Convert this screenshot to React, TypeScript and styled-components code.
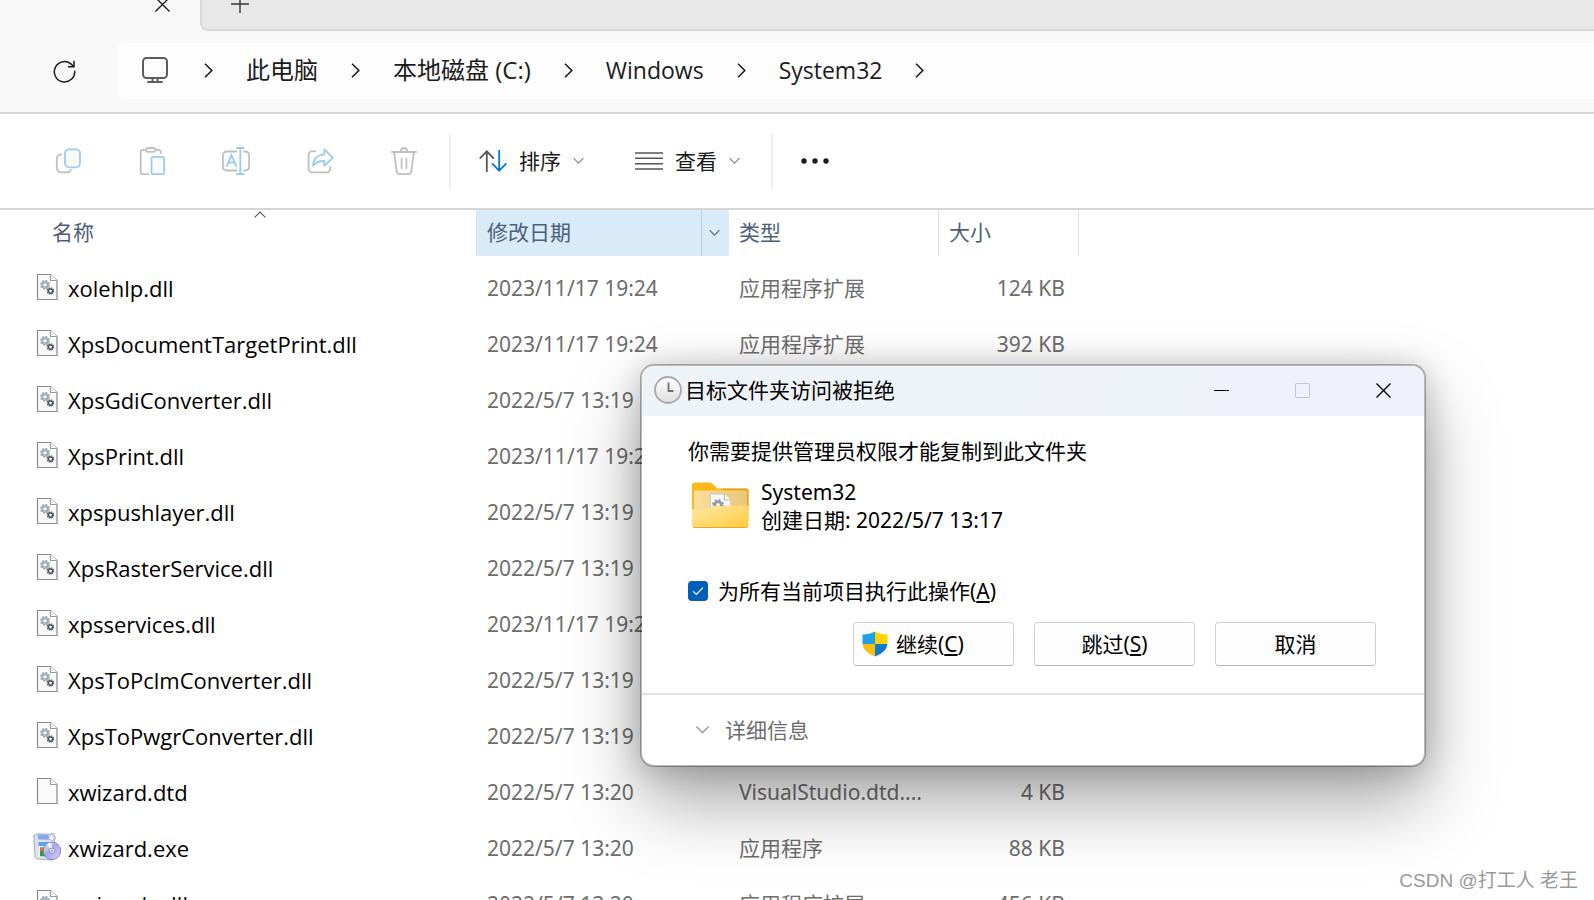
import React from "react";
import styled, { createGlobalStyle } from "styled-components";

const GlobalStyle = createGlobalStyle`
  * { box-sizing: border-box; }
  body {
    margin: 0;
    background: #fff;
    color: #000;
    font: 21px/28px "Noto Sans", "Noto Sans CJK SC", sans-serif;
  }
  button {
    margin: 0;
    padding: 0;
    border: 0;
    background: none;
    color: inherit;
    font: inherit;
  }
  svg { display: block; flex: none; }
`;

const Page = styled.div`
  position: relative;
  display: flex;
  flex-direction: column;
  height: 100vh;
  overflow: hidden;
`;

/* ---------- window chrome ---------- */

const TabStrip = styled.div`
  display: flex;
  flex: none;
  height: 54px;
  margin-top: -23px;
  background: #f8f8f8;
`;

const ActiveTab = styled.div`
  display: flex;
  flex: none;
  align-items: center;
  justify-content: flex-end;
  width: 200px;
  padding-right: 30px;
  color: #1b1b1b;
`;

const InactiveStrip = styled.div`
  display: flex;
  flex: 1;
  align-items: center;
  padding: 2px 0 0 29px;
  border: 2px solid #d8d8d8;
  border-width: 0 0 2px 2px;
  border-bottom-left-radius: 8px;
  background: #e8e8e8;
  color: #3a3a3a;
`;

const AddressRow = styled.div`
  display: flex;
  flex: none;
  align-items: center;
  height: 83px;
  padding: 0 0 1px 53px;
  border-bottom: 2px solid #d5d5d5;
  background: #f8f8f8;
  color: #1b1b1b;
`;

const Breadcrumb = styled.nav`
  display: flex;
  flex: 1;
  align-items: center;
  gap: 33px;
  height: 56px;
  margin-left: 41px;
  padding: 0 0 2px 25px;
  border-radius: 8px 0 0 8px;
  background: #fdfdfd;
`;

const CrumbRoot = styled.button`
  margin-right: 3px;
`;

const Crumb = styled.button<{ $latin: boolean }>`
  font-family: "Open Sans", "Noto Sans CJK SC", sans-serif;
  font-size: ${(p) => (p.$latin ? 23 : 24)}px;
  line-height: 32px;
  white-space: nowrap;
`;

/* ---------- command bar ---------- */

const Toolbar = styled.div`
  display: flex;
  flex: none;
  align-items: center;
  height: 96px;
  padding-left: 54px;
  border-bottom: 2px solid #d5d5d5;
  color: #1b1b1b;
`;

const IconGroup = styled.div`
  display: flex;
  gap: 56px;
`;

const MenuGroup = styled.div`
  display: flex;
  gap: 51px;
`;

const Divider = styled.div`
  width: 2px;
  height: 56px;
  margin: 0 28px 0 31px;
  background: #efefef;
`;

const MenuButton = styled.button`
  display: flex;
  align-items: center;
  gap: 12px;
`;

/* ---------- file list ---------- */

const FileTable = styled.table`
  flex: none;
  width: 1079px;
  border-collapse: separate;
  border-spacing: 0;
  table-layout: fixed;
`;

const HeadCell = styled.th<{ $width: number }>`
  width: ${(p) => p.$width}px;
  height: 50px;
  padding: 0 0 4px;
  color: #4c607a;
  font-weight: 400;
  text-align: left;
  vertical-align: top;
`;

const HeadLabel = styled.div<{ $indent: number; $active?: boolean }>`
  position: relative;
  display: flex;
  align-items: center;
  height: 46px;
  padding: 0 0 2px ${(p) => p.$indent}px;
  border-right: ${(p) => (p.$active ? "0" : "1px solid #e0e0e0")};
  border-radius: ${(p) => (p.$active ? "2px" : "0")};
  background: ${(p) => (p.$active ? "#d9ebf9" : "transparent")};
`;

const SortMark = styled.span`
  position: absolute;
  top: 1px;
  left: 254px;
  color: #555;
`;

const FilterButton = styled.button`
  display: flex;
  align-items: center;
  justify-content: center;
  align-self: flex-start;
  width: 28px;
  height: 46px;
  margin-left: auto;
  padding-right: 3px;
  border-left: 1px solid #b9cfe0;
  color: #5f6b78;
`;

const Cell = styled.td<{ $indent?: number; $right?: boolean }>`
  height: 56px;
  padding: 0 ${(p) => (p.$right ? 14 : 0)}px 0 ${(p) => p.$indent ?? 0}px;
  color: #6d6d6d;
  text-align: ${(p) => (p.$right ? "right" : "left")};
  white-space: nowrap;
`;

const FileName = styled.div`
  display: flex;
  align-items: center;
  gap: 7px;
  padding-left: 33px;
  color: #000;
  font-family: "Open Sans", sans-serif;
  font-size: 22px;

  svg { margin-bottom: 2px; }
`;

/* ---------- dialog ---------- */

const Dialog = styled.section`
  position: absolute;
  top: 364px;
  left: 640px;
  width: 786px;
  border: 2px solid rgba(0, 0, 0, 0.28);
  border-radius: 14px;
  background: #fff;
  background-clip: padding-box;
  box-shadow: 0 36px 72px rgba(0, 0, 0, 0.34), 0 2px 32px rgba(0, 0, 0, 0.2);
`;

const TitleBar = styled.header`
  display: flex;
  align-items: center;
  gap: 3px;
  height: 50px;
  padding: 0 33px 2px 12px;
  border-radius: 12px 12px 0 0;
  background: linear-gradient(100deg, #eef3f8 40%, #eff2fa 80%);
`;

const DialogTitle = styled.h1`
  flex: 1;
  margin: 0;
  font: inherit;
`;

const WindowButtons = styled.div`
  display: flex;
  gap: 66px;
`;

const DialogBody = styled.div`
  padding: 21px 48px 27px 46px;
`;

const Message = styled.p`
  margin: 0;
`;

const Target = styled.div`
  display: flex;
  align-items: center;
  gap: 12px;
  margin-top: 13px;
  padding-left: 4px;

  svg { margin-bottom: 3px; }
`;

const ApplyAll = styled.label`
  display: flex;
  align-items: center;
  gap: 10px;
  margin-top: 43px;
`;

const CheckBox = styled.span`
  display: grid;
  place-items: center;
  width: 20px;
  height: 20px;

  & > * { grid-area: 1 / 1; }
  svg { z-index: 1; pointer-events: none; }
  input {
    appearance: none;
    width: 20px;
    height: 20px;
    margin: 0;
    border-radius: 4px;
    background: #005fb8;
  }
`;

const Actions = styled.div`
  display: flex;
  justify-content: flex-end;
  gap: 20px;
  margin-top: 17px;
`;

const ActionButton = styled.button<{ $start?: boolean }>`
  display: flex;
  align-items: center;
  justify-content: ${(p) => (p.$start ? "flex-start" : "center")};
  gap: 8px;
  width: 161px;
  height: 44px;
  padding-left: ${(p) => (p.$start ? 8 : 0)}px;
  border: 1px solid #d0d0d0;
  border-bottom-color: #b8b8b8;
  border-radius: 4px;
  background: #fdfdfd;
`;

const DialogFooter = styled.footer`
  height: 72px;
  padding: 21px 0 0 53px;
  border-top: 2px solid #e3e3e3;
  color: #6d6d6d;
`;

const DetailsButton = styled.button`
  display: flex;
  align-items: center;
  gap: 15px;
`;

const Watermark = styled.div`
  position: absolute;
  right: 16px;
  bottom: 5px;
  color: #999;
  font-family: "Liberation Sans", "Noto Sans CJK SC", sans-serif;
  font-size: 19px;
  text-shadow: 1px 1px 0 #fff;
`;

/* ---------- icons ---------- */

const line = { fill: "none", stroke: "currentColor" } as const;
const GRAY = "#c0c0c0";
const BLUE = "#9bcbf2";

const CloseIcon = () => (
  <svg width="15" height="15" viewBox="0 0 15 15" {...line} strokeWidth="1.4">
    <path d="M.5.5l14 14M14.5.5l-14 14" />
  </svg>
);

const PlusIcon = () => (
  <svg width="18" height="18" viewBox="0 0 18 18" {...line} strokeWidth="1.4">
    <path d="M9 0v18M0 9h18" />
  </svg>
);

const RefreshIcon = () => (
  <svg width="23" height="23" viewBox="0 0 23 23" {...line} strokeWidth="1.5">
    <path d="M21.700 10.800A10.200 10.200 0 1 1 18.600 4.400l2 2.200" />
    <path d="M21 .8v6h-6" />
  </svg>
);

const MonitorIcon = () => (
  <svg width="26" height="26" viewBox="0 0 26 26" {...line} stroke="#5c5c5c" strokeWidth="2" strokeLinecap="round">
    <rect x="1" y="1" width="24" height="20" rx="3.5" />
    <path d="M10.500 21.500v3M15.500 21.500v3M6 25h14" />
  </svg>
);

const CrumbChevron = () => (
  <svg width="9" height="15" viewBox="0 0 9 15" {...line} strokeWidth="1.6">
    <path d="M1 .8l6.800 6.700L1 14.200" />
  </svg>
);

const DownChevron = ({ width = 11, color = "#8a8a8a" }: { width?: number; color?: string }) => (
  <svg width={width} height={(width + 1) / 2 + 2} viewBox="0 0 11 8" {...line} stroke={color} strokeWidth="1.200">
    <path d="M.6 1.200l4.900 5 4.900-5" />
  </svg>
);

const UpChevron = () => (
  <svg width="12" height="7" viewBox="0 0 12 7" {...line} strokeWidth="1.100">
    <path d="M.6 6.400L6 1l5.400 5.400" />
  </svg>
);

const CopyIcon = () => (
  <svg width="28" height="28" viewBox="0 0 28 28" fill="none" strokeWidth="1.800" strokeLinecap="round">
    <path stroke={GRAY} d="M7.500 7.300C4.500 7.300 2.800 9 2.800 12v8.500c0 3.200 1.600 4.900 4.900 4.900h4.800c2.200 0 3.700-.8 4.300-2.500" />
    <rect stroke={BLUE} x="11" y="2.300" width="15" height="18" rx="4" fill="#fafafa" />
  </svg>
);

const PasteIcon = () => (
  <svg width="28" height="28" viewBox="0 0 28 28" fill="none" strokeWidth="1.800" strokeLinecap="round">
    <path stroke={GRAY} d="M7 2.800H5C3.500 2.800 2.700 3.600 2.700 5v20c0 1.400.8 2.200 2.300 2.200h5.200M18 2.800h2.500c1.400 0 2.200.8 2.200 2.200v1.200" />
    <rect stroke={GRAY} x="8" y="1" width="9.500" height="3.800" rx="1.900" />
    <rect stroke={BLUE} x="13.500" y="9.800" width="12.700" height="17.400" rx="1.800" fill="#fafafa" />
  </svg>
);

const RenameIcon = () => (
  <svg width="28" height="28" viewBox="0 0 28 28" fill="none" strokeWidth="1.800" strokeLinecap="round">
    <path stroke={GRAY} d="M14.500 4.500H5C2.400 4.500.9 6 .9 8.500v11c0 2.500 1.500 4 4.100 4h9.500M22 4.500h1c2.600 0 4.100 1.500 4.100 4v11c0 2.500-1.500 4-4.100 4h-1" />
    <path stroke={BLUE} d="M4.800 19L9.500 8l4.700 11M6.400 15.500h6.200M14.800 1h7M14.800 27h7M18.300 1v26" />
  </svg>
);

const ShareIcon = () => (
  <svg width="28" height="28" viewBox="0 0 28 28" fill="none" strokeWidth="1.800" strokeLinecap="round" strokeLinejoin="round">
    <path stroke={GRAY} d="M9.500 4.200H6.800c-2.800 0-4.200 1.500-4.200 4.200v12.800c0 2.700 1.400 4.200 4.200 4.200h13.400c2.700 0 4.200-1.500 4.200-4.200V20" />
    <path stroke={BLUE} d="M18.300 2.500v4.800C12 7.600 7.500 11.600 7 18.600c2.800-3.400 6.600-4.700 11.300-4.600v4.800l8.500-8.200z" />
  </svg>
);

const TrashIcon = () => (
  <svg width="28" height="28" viewBox="0 0 28 28" fill="none" stroke={GRAY} strokeWidth="1.800" strokeLinecap="round">
    <path d="M1.800 5h24.400M4.200 5.500l2.500 19.200c.2 1.600 1.200 2.500 2.800 2.500h9c1.600 0 2.600-.9 2.800-2.500l2.500-19.200M10.500 4.500C10.800 2.200 12 1 14 1s3.200 1.200 3.500 3.500M11.600 12v9M16.400 12v9" />
  </svg>
);

const SortIcon = () => (
  <svg width="28" height="22" viewBox="0 0 28 22" fill="none" strokeWidth="1.800">
    <path stroke="#555" d="M7.800 22V1.500M.7 8.600L7.800 1.300l7.100 7.300" />
    <path stroke="#0078d4" d="M20.200 0v20.500M13.100 13.400l7.100 7.300 7.100-7.300" />
  </svg>
);

const ViewIcon = () => (
  <svg width="28" height="18" viewBox="0 0 28 18" {...line} stroke="#555" strokeWidth="1.600">
    <path d="M0 1h28M0 6.300h28M0 11.700h28M0 17h28" />
  </svg>
);

const MoreIcon = () => (
  <svg width="28" height="6" viewBox="0 0 28 6" fill="#1b1b1b">
    <circle cx="3" cy="3" r="2.700" />
    <circle cx="14" cy="3" r="2.700" />
    <circle cx="25" cy="3" r="2.700" />
  </svg>
);

const Gear = ({ x, y, r, color }: { x: number; y: number; r: number; color: string }) => (
  <g transform={`translate(${x} ${y})`} fill="none" stroke={color}>
    <circle r={r * 0.6} strokeWidth={r * 0.5} />
    <circle r={r * 0.92} strokeWidth={r * 0.36} strokeDasharray={`${r * 0.4} ${r * 0.3226}`} />
  </g>
);

const PageIcon = ({ gears }: { gears?: boolean }) => (
  <svg width="28" height="28" viewBox="0 0 28 28">
    <path d="M4.500 1.500h13l6.500 6v19H4.500z" fill="#fafafa" stroke="#8a8a8a" strokeWidth="1.200" />
    <path d="M17.500 1.500v6H24" fill="#fff" stroke="#9a9a9a" strokeWidth="1.100" />
    {gears && (
      <>
        <Gear x={12} y={11.800} r={4.600} color="#a3afba" />
        <Gear x={17.500} y={18} r={3.500} color="#56626c" />
      </>
    )}
  </svg>
);

const InstallerIcon = () => (
  <svg width="28" height="28" viewBox="0 0 28 28">
    <defs>
      <linearGradient id="disc" x1="0" y1="0" x2="1" y2="1">
        <stop offset="0" stopColor="#e6e6fb" />
        <stop offset=".45" stopColor="#a9a6ee" />
        <stop offset="1" stopColor="#d9daf8" />
      </linearGradient>
    </defs>
    <path d="M.8 2.500l3.500-1.700L16 1.200 20.500.6l1.800 4-.8 3v17.500l-2 2-16-1.300L2 24z" fill="#dde2ec" stroke="#8d97ab" strokeWidth=".8" />
    <path d="M4.500 1.800l11 .3 1 4.700-11-.3z" fill="#86a6ee" />
    <path d="M15.500 5.500l3-4 3 3-2 3.500z" fill="#f4f6fa" stroke="#a0a8b8" strokeWidth=".5" />
    <path d="M5.500 9H20v4H5.500z" fill="#5aa6ee" />
    <path d="M5.500 13H13v10.500l-7.500-.6z" fill="#e8eef8" />
    <path d="M7 14.500h5.500v9L7 23z" fill="#2f9e35" />
    <path d="M7 14.500h3V18H7z" fill="#e2702c" />
    <circle cx="19" cy="17.800" r="8.700" fill="url(#disc)" stroke="#7c7fae" strokeWidth=".9" />
    <path d="M19 17.800l-5.500-6.300a8.300 8.300 0 0 1 4.800-1.900z" fill="#f6f6ff" />
    <circle cx="19" cy="17.800" r="2.700" fill="#eef0fa" stroke="#8689b5" strokeWidth=".9" />
    <circle cx="19" cy="17.800" r=".9" fill="#6a6d96" />
  </svg>
);

const ClockIcon = () => (
  <svg width="28" height="28" viewBox="0 0 28 28">
    <defs>
      <linearGradient id="dial" x1="0" y1="0" x2="0" y2="1">
        <stop offset="0" stopColor="#fff" />
        <stop offset="1" stopColor="#dedede" />
      </linearGradient>
    </defs>
    <circle cx="14" cy="14" r="13" fill="url(#dial)" stroke="#a9a9a9" strokeWidth="1.800" />
    <path d="M14.500 6.500V15h5" fill="none" stroke="#6f6f6f" strokeWidth="1.800" />
  </svg>
);

const FolderIcon = () => (
  <svg width="57" height="46" viewBox="0 0 57 46">
    <defs>
      <linearGradient id="front" x1="0" y1="0" x2="1" y2="1">
        <stop offset="0" stopColor="#ffe9a6" />
        <stop offset="1" stopColor="#ffcc3e" />
      </linearGradient>
      <linearGradient id="inner" x1="0" y1="0" x2="1" y2="0">
        <stop offset="0" stopColor="#fadf9c" />
        <stop offset="1" stopColor="#e9c678" />
      </linearGradient>
    </defs>
    <path d="M0 3q0-2.500 2.500-2.500H17q2 0 3.500 1.300L25.500 6.500H54q2.500 0 2.500 2.500v30H0z" fill="#fbb917" />
    <path d="M30 6.500h24q2.500 0 2.500 2.500v20H50z" fill="#e9a51c" />
    <path d="M2 8.500h53V30H2z" fill="url(#inner)" />
    <path d="M18.500 12h14l6 6v12h-20z" fill="#f8f8f8" stroke="#c9c2b0" strokeWidth=".8" />
    <path d="M32.500 12v6h6" fill="#fff" stroke="#bdb7a8" />
    <Gear x={26} y={23} r={5.400} color="#8f9ba6" />
    <path d="M0 28.500q0-1.500 2-1.600l13-.4q2-.1 3.500-1l1-.6q1.300-.8 3-.9l32-.5q2 0 2 2V42.500q0 3-3 3H3q-3 0-3-3z" fill="url(#front)" />
    <path d="M1 44.500q1 1 2 1h50.500q1.500 0 2.500-1" fill="none" stroke="#e7a823" />
  </svg>
);

const ShieldIcon = () => (
  <svg width="26" height="26" viewBox="0 0 26 26">
    <path d="M13 .5Q8 3.500.5 3.500V13H13z" fill="#1f9fe8" />
    <path d="M13 .5q5 3 12.500 3V13H13z" fill="#fdd400" />
    <path d="M.5 13Q1.500 21.500 13 25.500V13z" fill="#fdbf08" />
    <path d="M25.500 13Q24.500 21.500 13 25.500V13z" fill="#0f7ad8" />
  </svg>
);

/* ---------- data ---------- */

type FileKind = "dll" | "page" | "exe";

interface FileRow {
  name: string;
  date: string;
  kind: FileKind;
  type?: string;
  size?: string;
}

const files: FileRow[] = [
  { name: "xolehlp.dll", date: "2023/11/17 19:24", kind: "dll", type: "应用程序扩展", size: "124 KB" },
  { name: "XpsDocumentTargetPrint.dll", date: "2023/11/17 19:24", kind: "dll", type: "应用程序扩展", size: "392 KB" },
  { name: "XpsGdiConverter.dll", date: "2022/5/7 13:19", kind: "dll" },
  { name: "XpsPrint.dll", date: "2023/11/17 19:24", kind: "dll" },
  { name: "xpspushlayer.dll", date: "2022/5/7 13:19", kind: "dll" },
  { name: "XpsRasterService.dll", date: "2022/5/7 13:19", kind: "dll" },
  { name: "xpsservices.dll", date: "2023/11/17 19:24", kind: "dll" },
  { name: "XpsToPclmConverter.dll", date: "2022/5/7 13:19", kind: "dll" },
  { name: "XpsToPwgrConverter.dll", date: "2022/5/7 13:19", kind: "dll" },
  { name: "xwizard.dtd", date: "2022/5/7 13:20", kind: "page", type: "VisualStudio.dtd....", size: "4 KB" },
  { name: "xwizard.exe", date: "2022/5/7 13:20", kind: "exe", type: "应用程序", size: "88 KB" },
  { name: "xwizards.dll", date: "2022/5/7 13:20", kind: "dll", type: "应用程序扩展", size: "456 KB" },
];

const crumbs = [
  { label: "此电脑", latin: false },
  { label: "本地磁盘 (C:)", latin: false },
  { label: "Windows", latin: true },
  { label: "System32", latin: true },
];

const tools = [
  { label: "复制", Icon: CopyIcon },
  { label: "粘贴", Icon: PasteIcon },
  { label: "重命名", Icon: RenameIcon },
  { label: "共享", Icon: ShareIcon },
  { label: "删除", Icon: TrashIcon },
];

const FileIcon = ({ kind }: { kind: FileKind }) =>
  kind === "exe" ? <InstallerIcon /> : <PageIcon gears={kind === "dll"} />;

/* ---------- page ---------- */

export default function App() {
  return (
    <Page>
      <GlobalStyle />

      <TabStrip>
        <ActiveTab>
          <button aria-label="关闭标签页"><CloseIcon /></button>
        </ActiveTab>
        <InactiveStrip>
          <button aria-label="新建标签页"><PlusIcon /></button>
        </InactiveStrip>
      </TabStrip>

      <AddressRow>
        <button aria-label="刷新"><RefreshIcon /></button>
        <Breadcrumb>
          <CrumbRoot aria-label="桌面"><MonitorIcon /></CrumbRoot>
          <CrumbChevron />
          {crumbs.map(({ label, latin }) => (
            <React.Fragment key={label}>
              <Crumb $latin={latin}>{label}</Crumb>
              <CrumbChevron />
            </React.Fragment>
          ))}
        </Breadcrumb>
      </AddressRow>

      <Toolbar>
        <IconGroup>
          {tools.map(({ label, Icon }) => (
            <button key={label} aria-label={label}><Icon /></button>
          ))}
        </IconGroup>
        <Divider />
        <MenuGroup>
          <MenuButton><SortIcon />排序<DownChevron /></MenuButton>
          <MenuButton><ViewIcon />查看<DownChevron /></MenuButton>
        </MenuGroup>
        <Divider />
        <button aria-label="更多"><MoreIcon /></button>
      </Toolbar>

      <FileTable>
        <thead>
          <tr>
            <HeadCell $width={477}>
              <HeadLabel $indent={52}>
                名称
                <SortMark><UpChevron /></SortMark>
              </HeadLabel>
            </HeadCell>
            <HeadCell $width={252}>
              <HeadLabel $indent={10} $active>
                修改日期
                <FilterButton aria-label="筛选修改日期"><DownChevron color="#5f6b78" /></FilterButton>
              </HeadLabel>
            </HeadCell>
            <HeadCell $width={210}>
              <HeadLabel $indent={10}>类型</HeadLabel>
            </HeadCell>
            <HeadCell $width={140}>
              <HeadLabel $indent={10}>大小</HeadLabel>
            </HeadCell>
          </tr>
        </thead>
        <tbody>
          {files.map((file) => (
            <tr key={file.name}>
              <Cell>
                <FileName><FileIcon kind={file.kind} />{file.name}</FileName>
              </Cell>
              <Cell $indent={10}>{file.date}</Cell>
              <Cell $indent={10}>{file.type}</Cell>
              <Cell $right>{file.size}</Cell>
            </tr>
          ))}
        </tbody>
      </FileTable>

      <Dialog role="dialog" aria-labelledby="dialog-title">
        <TitleBar>
          <ClockIcon />
          <DialogTitle id="dialog-title">目标文件夹访问被拒绝</DialogTitle>
          <WindowButtons>
            <button aria-label="最小化">
              <svg width="15" height="15" viewBox="0 0 15 15" {...line}><path d="M0 7.500h15" /></svg>
            </button>
            <button aria-label="最大化">
              <svg width="15" height="15" viewBox="0 0 15 15" {...line} stroke="#c2c4ca"><rect x=".5" y=".5" width="14" height="14" rx="1" /></svg>
            </button>
            <button aria-label="关闭"><CloseIcon /></button>
          </WindowButtons>
        </TitleBar>

        <DialogBody>
          <Message>你需要提供管理员权限才能复制到此文件夹</Message>
          <Target>
            <FolderIcon />
            <div>
              <div>System32</div>
              <div>创建日期: 2022/5/7 13:17</div>
            </div>
          </Target>
          <ApplyAll>
            <CheckBox>
              <input type="checkbox" defaultChecked />
              <svg width="12" height="10" viewBox="0 0 12 10" fill="none" stroke="#fff" strokeWidth="1.200">
                <path d="M1 5.200l3.300 3.300L11 1.600" />
              </svg>
            </CheckBox>
            <span>为所有当前项目执行此操作(<u>A</u>)</span>
          </ApplyAll>
          <Actions>
            <ActionButton $start><ShieldIcon /><span>继续(<u>C</u>)</span></ActionButton>
            <ActionButton><span>跳过(<u>S</u>)</span></ActionButton>
            <ActionButton>取消</ActionButton>
          </Actions>
        </DialogBody>

        <DialogFooter>
          <DetailsButton><DownChevron width={15} color="#9a9a9a" />详细信息</DetailsButton>
        </DialogFooter>
      </Dialog>

      <Watermark>CSDN @打工人 老王</Watermark>
    </Page>
  );
}
